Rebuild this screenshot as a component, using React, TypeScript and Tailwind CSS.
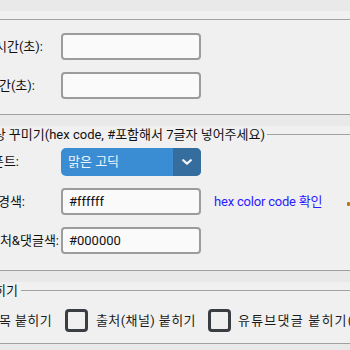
import React from "react";

function Legend({ text, w, gap }: { text?: string; w: string; gap: string }) {
  return (
    <div className="flex items-center h-[17px]">
      <div className={`${w} shrink-0 flex justify-end whitespace-nowrap leading-[17px]`}>{text}</div>
      <div className={`flex-1 h-px bg-[#a2a2a2] ${gap}`} />
    </div>
  );
}

function TextBox({ value }: { value?: string }) {
  return (
    <div className="w-[140px] h-[27px] shrink-0 border-2 border-[#9c9c9c] rounded-[4px] bg-[#fafafa] flex items-center pl-[6px] text-[#111]">
      {value}
    </div>
  );
}

export default function App() {
  return (
    <div className="w-[350px] h-[350px] overflow-hidden bg-[#e9e9e9] text-[13px] text-[#111] font-[Roboto,'Noto_Sans_CJK_KR',sans-serif]">
      <div className="h-[11px]" />
      <section className="h-[104px] bg-[#f0f0f0] border-b border-[#a0a0a0]">
        <Legend w="w-0" gap="ml-0" />
        <div className="flex items-center mt-[5px]">
          <div className="w-[61px] shrink-0 flex justify-end whitespace-nowrap pr-[18px]">재생시간(초):</div>
          <TextBox />
        </div>
        <div className="flex items-center mt-[12px]">
          <div className="w-[61px] shrink-0 flex justify-end whitespace-nowrap pr-[26px]">대기시간(초):</div>
          <TextBox />
        </div>
      </section>
      <div className="h-[11px]" />
      <section className="h-[145px] bg-[#f0f0f0] border-b border-[#a0a0a0]">
        <Legend text="영상 꾸미기(hex code, #포함해서 7글자 넣어주세요)" w="w-[265px]" gap="ml-[2px]" />
        <div className="flex items-center mt-[5px]">
          <div className="w-[61px] shrink-0 flex justify-end whitespace-nowrap pr-[42px]">폰트:</div>
          <div className="w-[140px] h-[28px] shrink-0 rounded-[5px] bg-[#3b8dd3] flex overflow-hidden">
            <div className="flex-1 pl-[7px] flex items-center text-[#eef4fb]">맑은 고딕</div>
            <div className="w-[28px] bg-[#356e9e] flex items-center justify-center">
              <svg width="10" height="6" viewBox="0 0 10 6">
                <path d="M1.2 1.2 L5 4.6 L8.8 1.2" fill="none" stroke="#f4f7fa" strokeWidth="2.2" strokeLinecap="round" strokeLinejoin="round" />
              </svg>
            </div>
          </div>
        </div>
        <div className="flex items-center mt-[12px]">
          <div className="w-[61px] shrink-0 flex justify-end whitespace-nowrap pr-[36px]">배경색:</div>
          <TextBox value="#ffffff" />
          <div className="ml-[13px] w-[108px] shrink-0 whitespace-nowrap tracking-[-0.2px] text-[#2b1bff]">hex color code 확인</div>
          <div className="ml-[25px] w-[3px] h-[4px] mt-[5px] shrink-0 bg-[#b4781e] rounded-[1px]" />
        </div>
        <div className="flex items-center mt-[12px]">
          <div className="w-[61px] shrink-0 flex justify-end whitespace-nowrap pr-[2px]">출처&amp;댓글색:</div>
          <TextBox value="#000000" />
        </div>
      </section>
      <div className="h-[11px]" />
      <section className="h-[62px] bg-[#f0f0f0] border-b border-[#a0a0a0]">
        <Legend text="붙히기" w="w-[18px]" gap="ml-[3px]" />
        <div className="flex items-center mt-[10px] whitespace-nowrap text-[#1c1c1c] tracking-[0.4px]">
          <div className="w-[52px] shrink-0 flex justify-end">제목 붙히기</div>
          <div className="ml-[13px] w-[23px] h-[23px] shrink-0 border-[3px] border-[#3a3e42] rounded-[4px]" />
          <div className="ml-[8px] w-[99px] shrink-0">출처(채널) 붙히기</div>
          <div className="ml-[13px] w-[23px] h-[23px] shrink-0 border-[3px] border-[#3a3e42] rounded-[4px]" />
          <div className="ml-[7px] shrink-0 tracking-[1.2px]">유튜브댓글 붙히기(최신)</div>
        </div>
      </section>
    </div>
  );
}
